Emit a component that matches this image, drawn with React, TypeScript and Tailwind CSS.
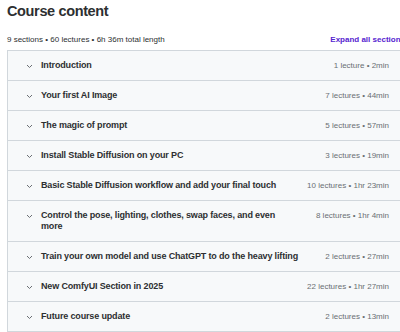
const sections = [
    { title: "Introduction", meta: "1 lecture • 2min" },
    { title: "Your first AI Image", meta: "7 lectures • 44min" },
    { title: "The magic of prompt", meta: "5 lectures • 57min" },
    { title: "Install Stable Diffusion on your PC", meta: "3 lectures • 19min" },
    { title: "Basic Stable Diffusion workflow and add your final touch", meta: "10 lectures • 1hr 23min" },
    { title: "Control the pose, lighting, clothes, swap faces, and even more", meta: "8 lectures • 1hr 4min" },
    { title: "Train your own model and use ChatGPT to do the heavy lifting", meta: "2 lectures • 27min" },
    { title: "New ComfyUI Section in 2025", meta: "22 lectures • 1hr 27min" },
    { title: "Future course update", meta: "2 lectures • 13min" },
];

const Chevron = () => (
    <svg width="7" height="5" viewBox="0 0 7 5" className="shrink-0 mt-[4px]">
        <path d="M1 1l2.5 2.5L6 1" fill="none" stroke="#6a6f73" strokeWidth="1" />
    </svg>
);

export default function App() {
    return (
        <div className="w-[400px] h-[332px] overflow-hidden bg-white font-['Liberation_Sans',Arial,sans-serif] text-[#2d2f31]">
            <div className="ml-[7px] w-[398px]">
                <h2 className="text-[14.5px] leading-[20px] pt-[1px] font-bold tracking-tight">
                    Course content
                </h2>
                <div className="flex justify-between items-center mt-[12px] h-[13px] text-[8px]">
                    <span>9 sections • 60 lectures • 6h 36m total length</span>
                    <span className="font-bold text-[#5624d0] whitespace-nowrap">
                        Expand all sections
                    </span>
                </div>
                <div className="mt-[4px] border border-[#d1d7dc] bg-[#f7f9fa]">
                    {sections.map((s, i) => (
                        <div
                            key={i}
                            className={`flex items-start pl-[18px] pr-[15px] py-[9px] leading-[11px] ${i > 0 ? "border-t border-[#d1d7dc]" : ""}`}
                        >
                            <Chevron />
                            <div className="ml-[8px] grow text-[9px] font-bold tracking-[-0.15px] pr-[23px]">
                                {s.title}
                            </div>
                            <div className="text-[8px] text-[#6a6f73] whitespace-nowrap">
                                {s.meta}
                            </div>
                        </div>
                    ))}
                </div>
            </div>
        </div>
    );
}
